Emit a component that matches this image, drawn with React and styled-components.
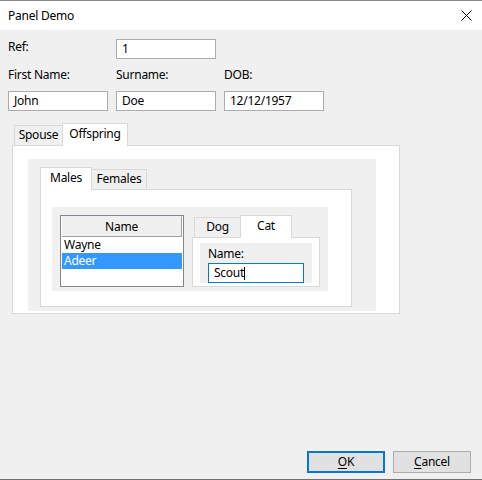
import React from 'react';
import styled, { createGlobalStyle } from 'styled-components';

const GlobalStyle = createGlobalStyle`
  html, body {
    margin: 0;
    padding: 0;
    background: #f0f0f0;
  }
  * {
    box-sizing: border-box;
  }
  body {
    font-family: "Noto Sans", "Open Sans", sans-serif;
    font-size: 12px;
    line-height: 16px;
    letter-spacing: -0.25px;
    color: #000;
  }
`;

const Window = styled.div`
  width: 482px;
  height: 480px;
  display: flex;
  flex-direction: column;
  background: #f0f0f0;
  border-top: 1px solid #8c8c8c;
  border-bottom: 1px solid #707070;
`;

const TitleBar = styled.div`
  height: 29px;
  flex: none;
  background: #fff;
  display: flex;
  align-items: center;
  justify-content: space-between;
  padding: 0 10px 0 8px;
`;

const Title = styled.span`
  font-size: 12px;
`;

const Body = styled.div`
  flex: 1;
  display: flex;
  flex-direction: column;
  padding: 9px 8px 0 8px;
`;

const FieldGrid = styled.div`
  display: grid;
  grid-template-columns: repeat(3, 100px);
  grid-template-rows: 20px 16px 20px;
  column-gap: 8px;
  row-gap: 8px;
`;

const Label = styled.div`
  line-height: 16px;
  white-space: nowrap;
`;

const TextBox = styled.div`
  width: ${(p) => p.$width || 100}px;
  height: 20px;
  background: #fff;
  border: 1px solid ${(p) => (p.$focused ? '#0078d7' : '#acacac')};
  padding: 0 5px;
  display: flex;
  align-items: center;
  white-space: nowrap;
`;

const Caret = styled.span`
  display: inline-block;
  width: 1px;
  height: 13px;
  background: #000;
`;

const TabControl = styled.div`
  display: flex;
  flex-direction: column;
  flex: none;
  margin: ${(p) => p.$margin || '0'};
`;

const TabStrip = styled.div`
  display: flex;
  align-items: flex-end;
  height: 23px;
  padding-left: ${(p) => p.$inset || 0}px;
  margin-bottom: -1px;
  position: relative;
  z-index: 1;
`;

const Tab = styled.div`
  width: ${(p) => p.$width}px;
  height: ${(p) => (p.$active ? 23 : 21)}px;
  border: 1px solid #d9d9d9;
  border-bottom: ${(p) => (p.$active ? 'none' : '1px solid #d9d9d9')};
  background: ${(p) => (p.$active ? '#fff' : '#f0f0f0')};
  position: relative;
  z-index: ${(p) => (p.$active ? 2 : 1)};
  display: flex;
  justify-content: center;
  padding-top: ${(p) => (p.$active ? 2 : 1)}px;
  & + & {
    margin-left: -1px;
  }
`;

const TabPanel = styled.div`
  width: ${(p) => p.$width}px;
  height: ${(p) => p.$height}px;
  background: #fff;
  border: 1px solid #d9d9d9;
  padding: ${(p) => p.$pad || '0'};
`;

const Group = styled.div`
  width: ${(p) => p.$width}px;
  height: ${(p) => p.$height}px;
  background: #f0f0f0;
  padding: ${(p) => p.$pad || '0'};
  display: flex;
  flex-direction: ${(p) => p.$dir || 'row'};
  gap: ${(p) => p.$gap || 0}px;
  align-items: flex-start;
`;

const ListView = styled.div`
  width: 124px;
  height: 72px;
  flex: none;
  background: #fff;
  border: 1px solid #828790;
  padding: 0 1px 1px 1px;
`;

const ListHeader = styled.div`
  height: 21px;
  background: #f0f0f0;
  border-top: 1px solid #f0f0f0;
  border-right: 1px solid #a0a0a0;
  border-bottom: 1px solid #a0a0a0;
  display: flex;
  align-items: center;
  justify-content: center;
`;

const ListRow = styled.div`
  height: 16px;
  line-height: 16px;
  padding-left: 2px;
  background: ${(p) => (p.$selected ? '#3399ff' : 'transparent')};
  color: ${(p) => (p.$selected ? '#fff' : '#000')};
`;

const Footer = styled.div`
  margin-top: auto;
  display: flex;
  justify-content: flex-end;
  gap: 8px;
  padding: 0 3px 6px 0;
`;

const Button = styled.button`
  width: 78px;
  height: 22px;
  background: #e1e1e1;
  border: ${(p) => (p.$default ? '2px solid #0078d7' : '1px solid #adadad')};
  font: inherit;
  letter-spacing: inherit;
  color: #000;
  padding: 0;
  display: flex;
  align-items: center;
  justify-content: center;
  u {
    text-decoration-thickness: 1px;
    text-underline-offset: 2px;
  }
`;

const CloseIcon = () => (
  <svg width="11" height="11" viewBox="0 0 11 11">
    <path d="M0.5 0.5 L10.5 10.5 M10.5 0.5 L0.5 10.5" stroke="#000" strokeWidth="1" fill="none" />
  </svg>
);

export default function App() {
  return (
    <>
      <GlobalStyle />
      <Window>
        <TitleBar>
          <Title>Panel Demo</Title>
          <CloseIcon />
        </TitleBar>
        <Body>
          <FieldGrid>
            <Label>Ref:</Label>
            <TextBox>1</TextBox>
            <div />
            <Label>First Name:</Label>
            <Label>Surname:</Label>
            <Label>DOB:</Label>
            <TextBox>John</TextBox>
            <TextBox>Doe</TextBox>
            <TextBox>12/12/1957</TextBox>
          </FieldGrid>

          <TabControl $margin="12px 0 0 4px">
            <TabStrip $inset={2}>
              <Tab $width={49}>Spouse</Tab>
              <Tab $width={66} $active>Offspring</Tab>
            </TabStrip>
            <TabPanel $width={388} $height={169} $pad="13px 0 0 15px">
              <Group $width={348} $height={152} $pad="8px 12px">
                <TabControl>
                  <TabStrip>
                    <Tab $width={52} $active>Males</Tab>
                    <Tab $width={56}>Females</Tab>
                  </TabStrip>
                  <TabPanel $width={312} $height={118} $pad="17px 0 0 11px">
                    <Group $width={276} $height={84} $pad="8px" $gap={8}>
                      <ListView>
                        <ListHeader>Name</ListHeader>
                        <ListRow>Wayne</ListRow>
                        <ListRow $selected>Adeer</ListRow>
                      </ListView>
                      <TabControl>
                        <TabStrip $inset={2}>
                          <Tab $width={47}>Dog</Tab>
                          <Tab $width={52} $active>Cat</Tab>
                        </TabStrip>
                        <TabPanel $width={128} $height={50} $pad="5px 0 0 7px">
                          <Group $width={112} $height={40} $pad="3px 0 0 8px" $dir="column" $gap={1}>
                            <Label>Name:</Label>
                            <TextBox $width={96} $focused>
                              Scout<Caret />
                            </TextBox>
                          </Group>
                        </TabPanel>
                      </TabControl>
                    </Group>
                  </TabPanel>
                </TabControl>
              </Group>
            </TabPanel>
          </TabControl>

          <Footer>
            <Button $default><span><u>O</u>K</span></Button>
            <Button><span><u>C</u>ancel</span></Button>
          </Footer>
        </Body>
      </Window>
    </>
  );
}
